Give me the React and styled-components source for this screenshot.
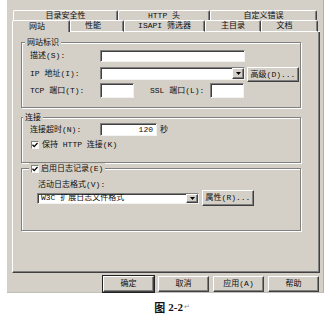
import React from 'react';
import styled, { createGlobalStyle } from 'styled-components';

const GRAY = '#d4d0c8';
const FONT = `"Liberation Mono", "Noto Sans CJK SC", monospace`;

const Global = createGlobalStyle`
  html, body { margin: 0; padding: 0; background: #fff; }
  body { font-family: ${FONT}; font-size: 8px; color: #0d0d0d; }
  * { box-sizing: border-box; }
`;

const Page = styled.div`
  width: 334px;
  height: 318px;
  display: flex;
  flex-direction: column;
  background: #fff;
  overflow: hidden;
`;

const Dialog = styled.div`
  margin-left: 7px;
  width: 317px;
  height: 293px;
  flex: none;
  background: ${GRAY};
  padding: 10px 0 0 5px;
  display: flex;
  flex-direction: column;
  border-right: 1px solid #b3b0a9;
  border-bottom: 1px solid #c2bfb8;
`;

const TabRow = styled.div`
  display: flex;
  height: ${p => p.$h}px;
  margin-left: ${p => p.$ml || 0}px;
  width: ${p => p.$w}px;
`;

const Tab = styled.div`
  width: ${p => p.$w}px;
  height: 100%;
  flex: none;
  display: flex;
  align-items: center;
  justify-content: center;
  padding-right: ${p => p.$pr || 0}px;
  border-top: 1px solid #fff;
  border-left: 1px solid #fff;
  border-right: 1px solid #404040;
  border-bottom: ${p => (p.$bottom ? '1px solid #fff' : 'none')};
  box-shadow: inset -1px 0 0 #808080;
  border-radius: 2px 2px 0 0;
  line-height: 1;
  white-space: nowrap;
`;

const TabFill = styled.div`
  flex: 1;
  border-bottom: 1px solid #fff;
`;

const Panel = styled.div`
  width: 308px;
  height: 241px;
  flex: none;
  border-left: 1px solid #fff;
  border-right: 1px solid #404040;
  border-bottom: 1px solid #404040;
  box-shadow: inset -1px -1px 0 #808080;
  padding: 10px 0 0 8px;
  display: flex;
  flex-direction: column;
`;

const Group = styled.div`
  width: 280px;
  height: ${p => p.$h}px;
  margin-top: ${p => p.$mt}px;
  flex: none;
  border: 1px solid #808080;
  box-shadow: inset 1px 1px 0 #fff, 1px 1px 0 #fff;
  display: flex;
  flex-direction: column;
`;

const Title = styled.div`
  display: flex;
  align-items: center;
  gap: 2px;
  width: fit-content;
  height: 11px;
  margin: -6px 0 -5px ${p => p.$ml}px;
  padding: 0 2px;
  background: ${GRAY};
  line-height: 11px;
  white-space: nowrap;
`;

const Content = styled.div`
  display: flex;
  flex-direction: column;
  padding-left: ${p => p.$pl}px;
`;

const Row = styled.div`
  display: flex;
  align-items: ${p => p.$align || 'center'};
  height: ${p => p.$h}px;
  margin-top: ${p => p.$mt}px;
  margin-left: ${p => p.$ml || 0}px;
`;

const Label = styled.div`
  width: ${p => (p.$w ? `${p.$w}px` : 'auto')};
  flex: none;
  height: ${p => (p.$h ? `${p.$h}px` : 'auto')};
  margin-left: ${p => p.$ml || 0}px;
  display: flex;
  align-items: center;
  line-height: 1;
  white-space: nowrap;
`;

const TextBox = styled.div`
  width: ${p => p.$w}px;
  height: ${p => p.$h}px;
  flex: none;
  background: #fff;
  border-top: 1px solid #808080;
  border-left: 1px solid #808080;
  border-right: 1px solid #f4f3f0;
  border-bottom: 1px solid #f4f3f0;
  box-shadow: inset 1px 1px 0 #404040;
  display: flex;
  align-items: center;
  justify-content: ${p => (p.$right ? 'flex-end' : 'flex-start')};
  padding: 0 3px 0 3px;
  margin-left: ${p => p.$ml || 0}px;
  line-height: 1;
  white-space: nowrap;
  overflow: hidden;
`;

const ComboText = styled.div`
  flex: 1;
  overflow: hidden;
  white-space: nowrap;
`;

const DropBtn = styled.div`
  width: 12px;
  height: 100%;
  flex: none;
  margin-right: -3px;
  background: ${GRAY};
  border-top: 1px solid #fff;
  border-left: 1px solid #fff;
  border-right: 1px solid #404040;
  border-bottom: 1px solid #404040;
  box-shadow: inset -1px -1px 0 #808080;
  display: flex;
  align-items: center;
  justify-content: center;
`;

const Button = styled.div`
  width: ${p => p.$w}px;
  height: ${p => p.$h}px;
  flex: none;
  margin-left: ${p => p.$ml || 0}px;
  background: ${GRAY};
  border-top: 1px solid #fff;
  border-left: 1px solid #fff;
  border-right: 1px solid #404040;
  border-bottom: 1px solid #404040;
  box-shadow: ${p => (p.$default ? '0 0 0 1px #222, inset -1px -1px 0 #808080' : 'inset -1px -1px 0 #808080')};
  display: flex;
  align-items: center;
  justify-content: center;
  line-height: 1;
  white-space: nowrap;
`;

const ButtonRow = styled.div`
  display: flex;
  justify-content: flex-end;
  gap: 4px;
  width: 308px;
  padding-right: 1px;
  margin-top: 3px;
`;

const Box = styled.div`
  width: 8px;
  height: 8px;
  flex: none;
  margin-left: ${p => p.$ml || 0}px;
  background: #fff;
  border-top: 1px solid #808080;
  border-left: 1px solid #808080;
  border-right: 1px solid #f4f3f0;
  border-bottom: 1px solid #f4f3f0;
  display: flex;
  align-items: center;
  justify-content: center;
`;

const Caption = styled.div`
  flex: 1;
  display: flex;
  align-items: center;
  justify-content: center;
  padding: 3px 0 0 10px;
  gap: 3px;
`;

const Fig = styled.span`
  font-family: "Noto Sans CJK SC", sans-serif;
  font-weight: 700;
  font-size: 11px;
  color: #111;
`;

const Num = styled.span`
  font-family: "Liberation Serif", serif;
  font-weight: 700;
  font-size: 11px;
  color: #111;
`;

const Mark = styled.span`
  font-family: "DejaVu Sans", sans-serif;
  font-size: 7px;
  color: #8a8a8a;
  margin-left: -2px;
`;

const Check = () => (
  <svg width="6" height="6" viewBox="0 0 6 6">
    <polyline points="0.5,2.8 2.2,4.6 5.5,1" fill="none" stroke="#000" strokeWidth="1.3" />
  </svg>
);

const Arrow = () => (
  <svg width="5" height="3" viewBox="0 0 5 3">
    <polygon points="0,0 5,0 2.5,3" fill="#000" />
  </svg>
);

const CheckBox = ({ ml }) => (
  <Box $ml={ml}>
    <Check />
  </Box>
);

export default function App() {
  return (
    <>
      <Global />
      <Page>
        <Dialog>
          <TabRow $h={10} $ml={1} $w={304}>
            <Tab $w={105}>目录安全性</Tab>
            <Tab $w={92}>HTTP 头</Tab>
            <Tab $w={107}>自定义错误</Tab>
          </TabRow>
          <TabRow $h={12} $w={308}>
            <Tab $w={58} $pr={8}>网站</Tab>
            <Tab $w={54} $bottom $pr={8}>性能</Tab>
            <Tab $w={81} $bottom>ISAPI 筛选器</Tab>
            <Tab $w={56} $bottom>主目录</Tab>
            <Tab $w={57} $bottom $pr={10}>文档</Tab>
            <TabFill />
          </TabRow>
          <Panel>
            <Group $h={66} $mt={0}>
              <Title $ml={3}>网站标识</Title>
              <Content $pl={8}>
                <Row $h={12} $mt={7}>
                  <Label $w={70}>描述(S):</Label>
                  <TextBox $w={145} $h={12} />
                </Row>
                <Row $h={15} $mt={5} $align="flex-start">
                  <Label $w={70} $h={13}>IP 地址(I):</Label>
                  <TextBox $w={145} $h={13}>
                    <ComboText />
                    <DropBtn><Arrow /></DropBtn>
                  </TextBox>
                  <Button $w={52} $h={15} $ml={2}>高级(D)...</Button>
                </Row>
                <Row $h={15} $mt={1}>
                  <Label $w={70}>TCP 端口(T):</Label>
                  <TextBox $w={34} $h={15} />
                  <Label $w={60} $ml={16}>SSL 端口(L):</Label>
                  <TextBox $w={34} $h={15} />
                </Row>
              </Content>
            </Group>
            <Group $h={46} $mt={9}>
              <Title $ml={1}>连接</Title>
              <Content $pl={8}>
                <Row $h={13} $mt={5}>
                  <Label $w={70}>连接超时(N):</Label>
                  <TextBox $w={57} $h={13} $right>120</TextBox>
                  <Label $ml={3}>秒</Label>
                </Row>
                <Row $h={8} $mt={5}>
                  <CheckBox ml={1} />
                  <Label $ml={3}>保持 HTTP 连接(K)</Label>
                </Row>
              </Content>
            </Group>
            <Group $h={63} $mt={5}>
              <Title $ml={7}>
                <CheckBox />
                <Label>启用日志记录(E)</Label>
              </Title>
              <Content $pl={16}>
                <Row $h={10} $mt={11}>
                  <Label>活动日志格式(V):</Label>
                </Row>
                <Row $h={16} $mt={0} $ml={-1}>
                  <TextBox $w={162} $h={11}>
                    <ComboText>W3C 扩展日志文件格式</ComboText>
                    <DropBtn><Arrow /></DropBtn>
                  </TextBox>
                  <Button $w={52} $h={16} $ml={3}>属性(R)...</Button>
                </Row>
              </Content>
            </Group>
          </Panel>
          <ButtonRow>
            <Button $w={51} $h={16} $default>确定</Button>
            <Button $w={51} $h={16}>取消</Button>
            <Button $w={51} $h={16}>应用(A)</Button>
            <Button $w={51} $h={16}>帮助</Button>
          </ButtonRow>
        </Dialog>
        <Caption>
          <Fig>图</Fig>
          <Num>2-2</Num>
          <Mark>↵</Mark>
        </Caption>
      </Page>
    </>
  );
}
